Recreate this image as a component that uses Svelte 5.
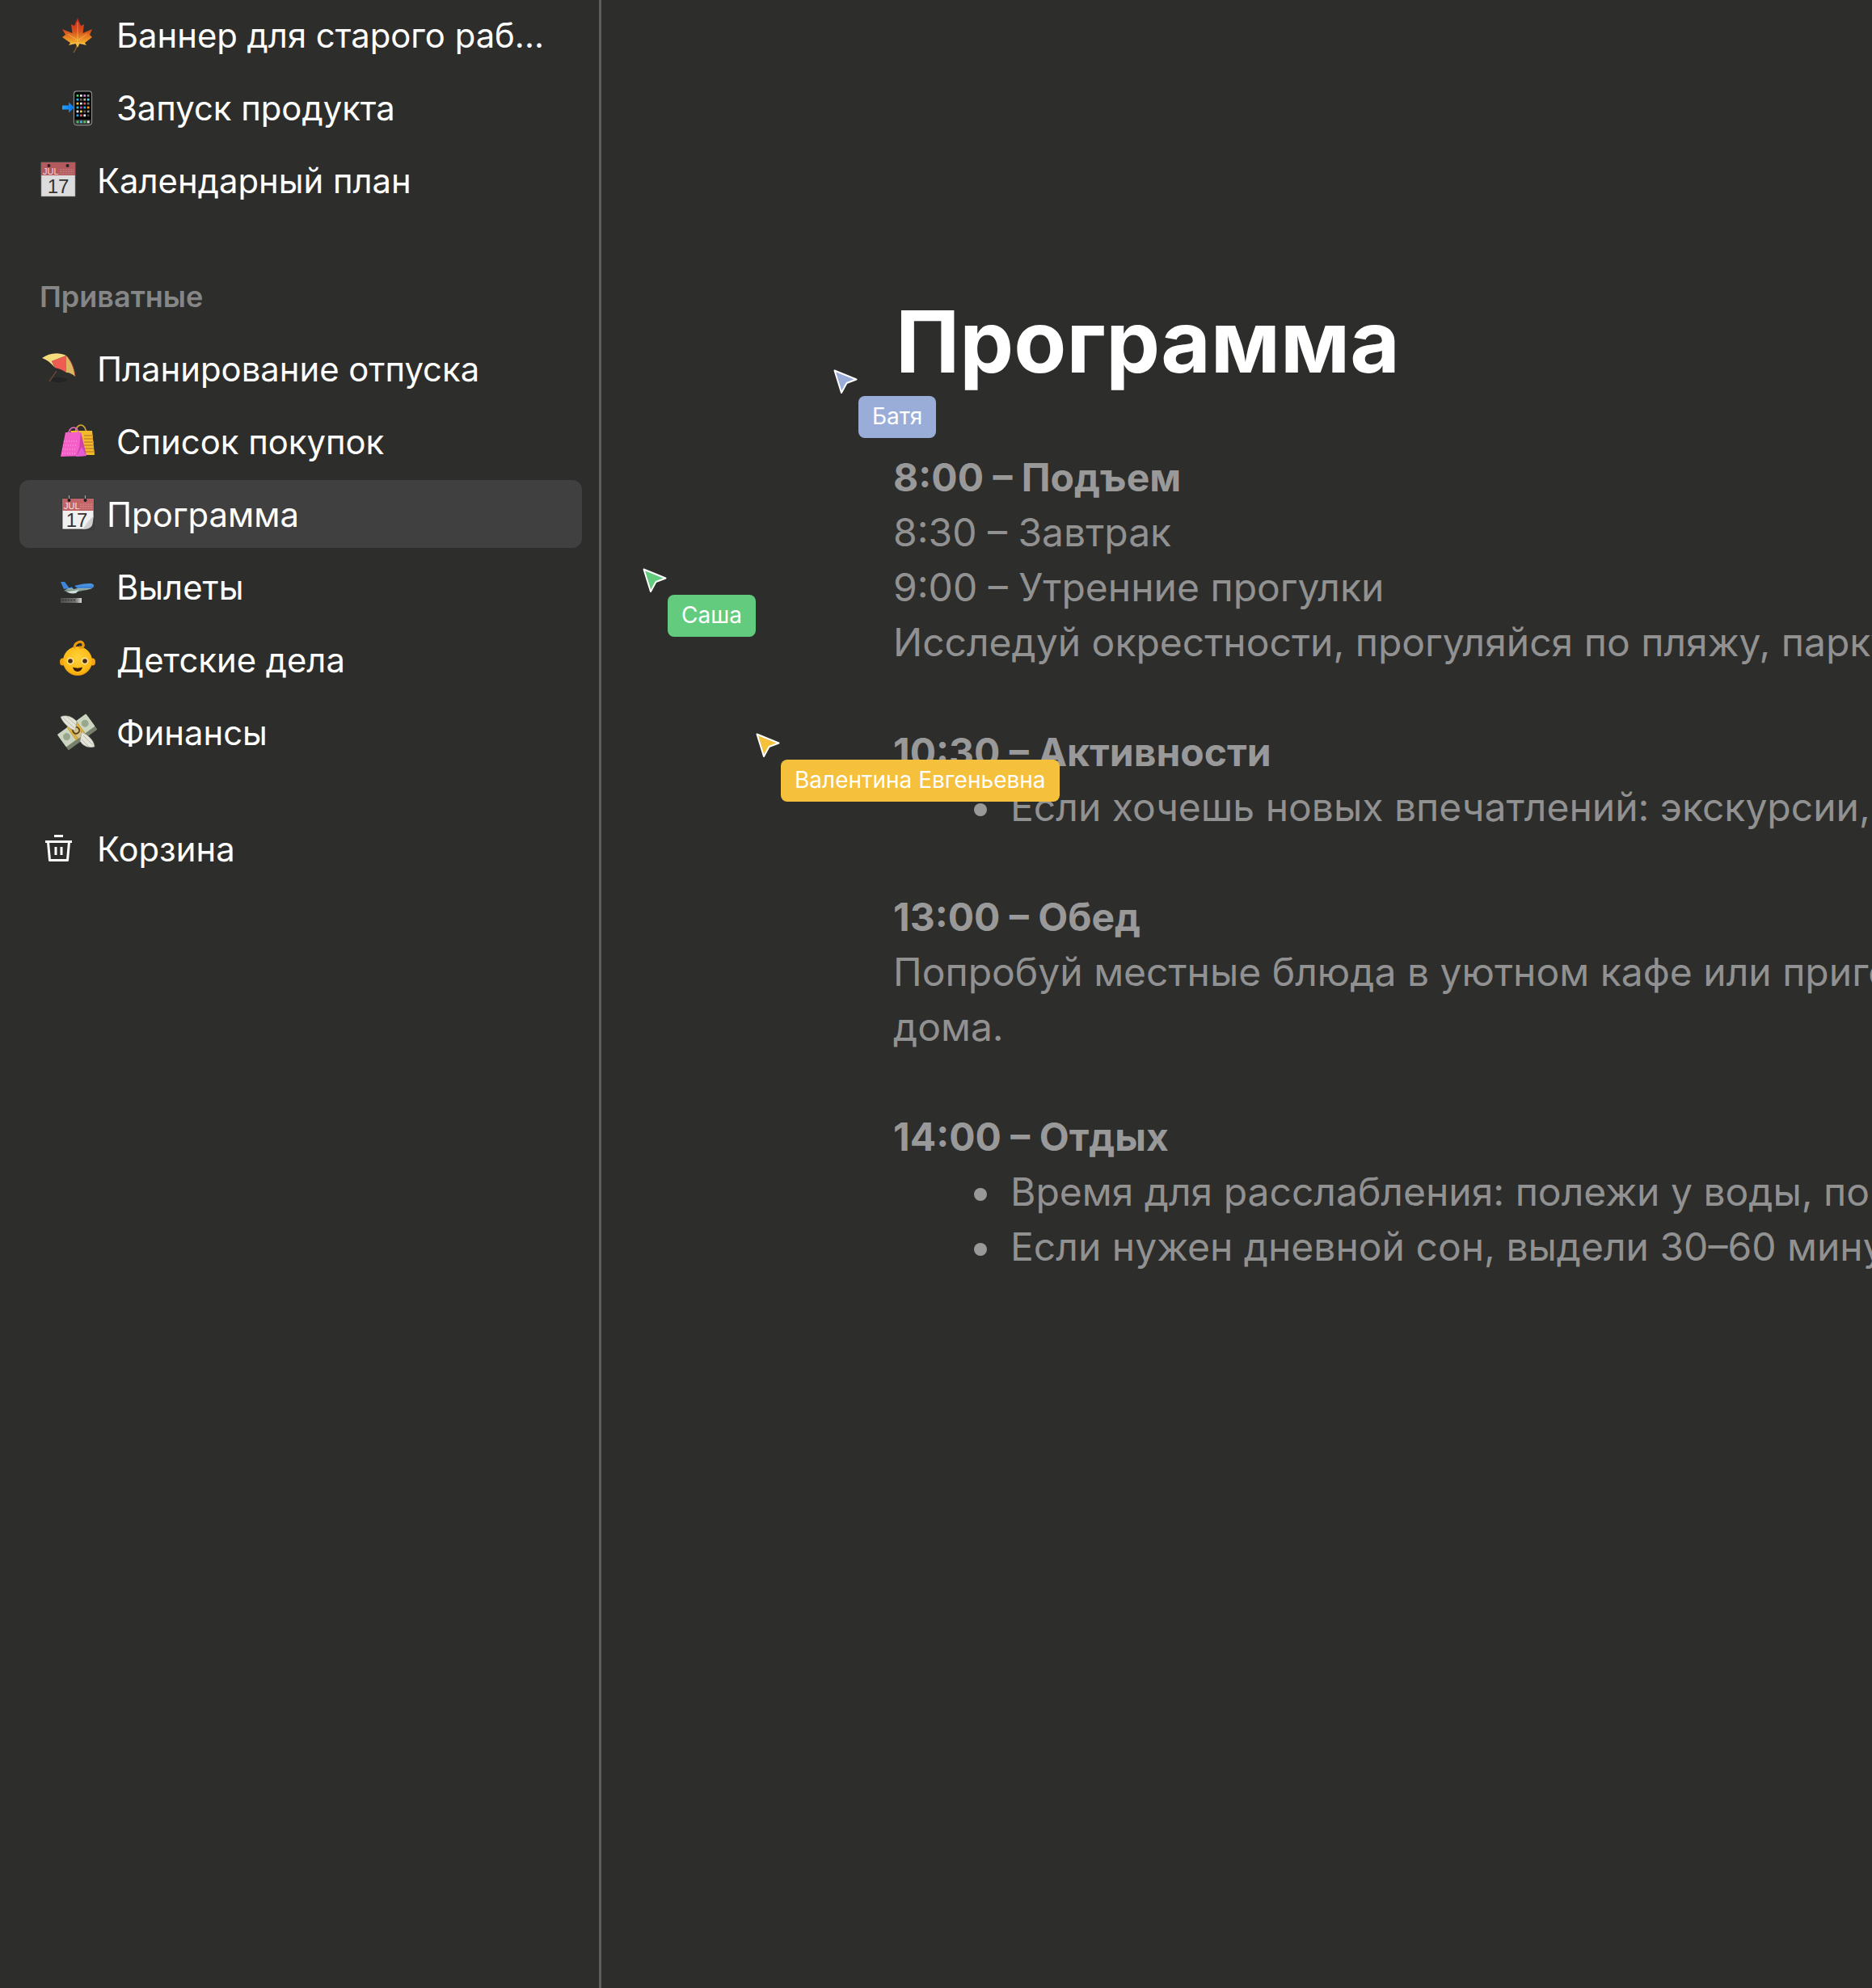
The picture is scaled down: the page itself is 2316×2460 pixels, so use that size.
<script>
  const phoneDots = [
    '#3ddc5c','#eee','#d58be0','#999',
    '#29b6f6','#666','#c9b58a','#5cd6e8',
    '#ffc93c','#eee','#e25a5a','#777',
    '#33c7d6','#c844d8','#29b6f6','#ff9f1a',
    '#fff','#ffd23c','#666','#999',
    '#2aa5ee','#e25a5a','#fff','#444'
  ];
  const dockDots = ['#35c96a','#3ab7f0','#3ddc5c','#eee'];

  const topRows = [
    { icon: 'leaf', label: 'Баннер для старого раб...', nested: true },
    { icon: 'phone', label: 'Запуск продукта', nested: true },
    { icon: 'calendar', label: 'Календарный план', nested: false }
  ];
  const privateRows = [
    { icon: 'umbrella', label: 'Планирование отпуска', nested: false },
    { icon: 'bags', label: 'Список покупок', nested: true },
    { icon: 'tear', label: 'Программа', nested: true, active: true },
    { icon: 'plane', label: 'Вылеты', nested: true },
    { icon: 'baby', label: 'Детские дела', nested: true },
    { icon: 'money', label: 'Финансы', nested: true }
  ];
  const cursors = [
    { name: 'Батя', color: '#9AADD8', left: 1030, top: 456 },
    { name: 'Саша', color: '#62CB7D', left: 794, top: 702 },
    { name: 'Валентина Евгеньевна', color: '#F5C03C', left: 934, top: 906 }
  ];
</script>

{#snippet emoji(name)}
  <svg class="emoji" viewBox="0 0 44 44" aria-hidden="true">
    {#if name === 'leaf'}
      <defs>
        <linearGradient id="lf" x1="0" y1="0" x2="0" y2="1">
          <stop offset="0" stop-color="#c8201c"/><stop offset=".45" stop-color="#d9501c"/>
          <stop offset=".8" stop-color="#f0a326"/><stop offset="1" stop-color="#f7c948"/>
        </linearGradient>
      </defs>
      <path d="M21 35 Q20 39 17 43" fill="none" stroke="#8a5a2a" stroke-width="1.4"/>
      <path fill="url(#lf)" d="M22 0 L26 10 L30 8 L28.500 19 L40 14 L37 21 L40 24 L31 31 L33 34 L24.500 32 L22 37 L19.500 32 L11 34 L13 31 L3 24 L7 21 L3 14 L15.500 19 L14 8 L18 10Z"/>
      <path d="M22 5 V34 M22 28 L10 20 M22 28 L34 20 M22 31 L13 32 M22 31 L31 32" stroke="#f6d37a" stroke-width=".7" fill="none" opacity=".75"/>
    {:else if name === 'phone'}
      <defs>
        <linearGradient id="ar" x1="0" y1="0" x2="1" y2="0"><stop offset="0" stop-color="#23a4ff"/><stop offset="1" stop-color="#0a6fe8"/></linearGradient>
      </defs>
      <rect x="17.500" y="0.800" width="22" height="42" rx="3.500" fill="#050505" stroke="#8d8d8d" stroke-width="1.200"/>
      {#each phoneDots as c, i}
        <rect x={20.6 + (i % 4) * 4.4} y={5 + Math.floor(i / 4) * 4.9} width="2.7" height="2.7" fill={c}/>
      {/each}
      <rect x="19" y="36" width="19" height="5.800" rx="1" fill="#3b3b3b"/>
      {#each dockDots as c, i}
        <rect x={20.6 + i * 4.4} y="37.5" width="2.8" height="2.8" fill={c}/>
      {/each}
      <path fill="url(#ar)" d="M3 18.500 H11 V14.500 L18 21 L11 27.500 V23.500 H3Z"/>
    {:else if name === 'calendar'}
      <rect x="1" y="-1" width="42" height="42" fill="#dcdcdc" stroke="#8a8a8a" stroke-width=".6"/>
      <rect x="1" y="-1" width="42" height="16" fill="#b4595d"/>
      <circle cx="10.500" cy="3" r="2" fill="#2a2024"/>
      <circle cx="33.500" cy="3" r="2" fill="#2a2024"/>
      <text x="3" y="13.500" class="cal-month" fill="#efdcdc">JUL</text>
      <path d="M24 8 H41 M24 10.500 H41 M24 13 H41" stroke="#cf8f91" stroke-width="1" stroke-dasharray="1.200 .8"/>
      <text x="22" y="37" text-anchor="middle" class="cal-day" fill="#333">17</text>
    {:else if name === 'tear'}
      <rect x="3" y="3" width="39" height="38" fill="#f0f0f0" stroke="#2c2c2c" stroke-width=".8"/>
      <rect x="3" y="3" width="39" height="15" fill="#c06468"/>
      <rect x="11" y="-1" width="1" height="5" fill="#9fb3c8"/><rect x="31" y="-1" width="1" height="5" fill="#9fb3c8"/>
      <circle cx="11.500" cy="5" r="2" fill="#231b1d"/>
      <circle cx="31.500" cy="5" r="2" fill="#231b1d"/>
      <text x="5" y="15.500" class="cal-month" fill="#f6e5e5">JUL</text>
      <path d="M25 10 H40 M25 12.500 H40 M25 15 H40" stroke="#dc9a9c" stroke-width="1" stroke-dasharray="1.200 .8"/>
      <text x="21" y="38" text-anchor="middle" class="cal-day" fill="#333">17</text>
      <path d="M42 25 L30 41 H42Z" fill="#3f3f3f"/>
      <path d="M42 24 C37 28 33 35 28 41 C33 41 38 40 40 36 C41 33 41 29 42 24Z" fill="#cfcfcf"/>
    {:else if name === 'umbrella'}
      <ellipse cx="23" cy="36" rx="10" ry="3" fill="#242424"/>
      <path d="M20 25 L11 38" stroke="#7a4b3c" stroke-width="1.300"/>
      <path fill="#f5dc7c" d="M2 9 C10 3 22 1 32 6 L14 13 L18 21 C13 15 8 11 2 9Z"/>
      <path fill="#ef5c52" d="M32 6 L14 13 C15 15 17 18 18 21 C23 22 28 24 32 27Z"/>
      <path fill="#dcb661" d="M32 6 C38 12 42 22 43 32 C40 29 36 27 32 27Z"/>
      <path d="M32 6 C38 12 42 22 43 32" stroke="#b3443e" stroke-width=".8" fill="none"/>
    {:else if name === 'bags'}
      <path d="M19 14 C19 -2 33 -2 33 14" fill="none" stroke="#d9a52f" stroke-width="1.600"/>
      <path fill="#f0bc2c" d="M13 9 H40 L43 39 H24Z"/>
      <path d="M30 15 H41 M30 19 H41 M30 23 H42 M30 27 H42 M30 31 H42 M30 35 H43" stroke="#d7912a" stroke-width="1.800"/>
      <path fill="#f45fc8" d="M7 11 H26 L33 40 L1 41Z"/>
      <path fill="#c63aa8" d="M26 11 L33 40 L20 41 L24 30Z" opacity=".8"/>
      <path fill="#e25dcf" d="M20 41 L27 29 L33 40Z"/>
      <path d="M10 17 C10 1 24 1 24 17" fill="none" stroke="#e36bb8" stroke-width="1.600"/>
      <path d="M5 22 H21 M4 27 H21 M3 32 H20 M3 37 H19" stroke="#ffb2e4" stroke-width="1" stroke-dasharray="1 2"/>
    {:else if name === 'plane'}
      <defs>
        <linearGradient id="pl" x1="0" y1="0" x2="0" y2="1"><stop offset="0" stop-color="#4b9be8"/><stop offset=".55" stop-color="#3d7fd0"/><stop offset=".6" stop-color="#9fb4a8"/><stop offset="1" stop-color="#5a7a72"/></linearGradient>
        <linearGradient id="rw" x1="0" y1="0" x2="1" y2="0"><stop offset="0" stop-color="#4d4d4d"/><stop offset=".7" stop-color="#6f6f6f"/><stop offset="1" stop-color="#d8d8d8"/></linearGradient>
      </defs>
      <path fill="#3e85dc" d="M1 16 L6 16 L12 24 L5 25Z"/>
      <path fill="url(#pl)" d="M5 27 C14 21 28 18 37 18 C41 18 43 20 42 22 C40 25 34 26 28 27 C20 29 10 29 5 27Z"/>
      <path d="M10 15 L22 24 L17 25Z" fill="#1f2c3a"/>
      <path d="M8 28 L24 26 L20 30 C15 31 11 30 8 28Z" fill="#cfdcd8"/>
      <rect x="1" y="36" width="26" height="6" fill="url(#rw)"/>
      <path d="M3 38.500 H20" stroke="#2e2e2e" stroke-width="1" stroke-dasharray="2 1.500"/>
    {:else if name === 'baby'}
      <defs>
        <radialGradient id="bb" cx=".5" cy=".4" r=".65"><stop offset="0" stop-color="#ffd23a"/><stop offset=".75" stop-color="#fdb813"/><stop offset="1" stop-color="#e8920a"/></radialGradient>
      </defs>
      <ellipse cx="3.500" cy="25" rx="3.500" ry="4.500" fill="#f4a40f"/>
      <ellipse cx="40.500" cy="25" rx="3.500" ry="4.500" fill="#f4a40f"/>
      <circle cx="22" cy="24" r="18" fill="url(#bb)"/>
      <path d="M18 7 C19 0 28 -2 29 3 C30 6 27 8 25 7" fill="none" stroke="#eb9a0d" stroke-width="3.200" stroke-linecap="round"/>
      <circle cx="13" cy="24" r="4.400" fill="#ffe49a"/><circle cx="31" cy="24" r="4.400" fill="#ffe49a"/>
      <circle cx="13" cy="24" r="2.800" fill="#4a2a10"/><circle cx="31" cy="24" r="2.800" fill="#4a2a10"/>
      <path d="M16 31.500 C19 33 25 33 28 31.500 C27 36 24 37 22 37 C20 37 17 36 16 31.500Z" fill="#3a1b08"/>
    {:else if name === 'money'}
      <g transform="rotate(-36 21 21)">
        <rect x="-1" y="14" width="44" height="20" rx="1" fill="#77806a"/>
        <rect x="-1" y="10" width="44" height="19" rx="1" fill="#ccd5c0"/>
        <circle cx="7" cy="19" r="4.500" fill="#98a88e"/><circle cx="35" cy="19" r="4.500" fill="#98a88e"/>
        <rect x="14" y="9.500" width="14" height="20" fill="#4c4a2c"/>
        <rect x="14" y="9.500" width="2.800" height="20" fill="#e3b23c"/>
        <rect x="25.200" y="9.500" width="2.800" height="20" fill="#e3b23c"/>
        <rect x="17" y="9.500" width="8" height="20" fill="#d3c58a"/>
        <circle cx="21" cy="19.500" r="4" fill="none" stroke="#5a3d12" stroke-width="1.800"/>
      </g>
      <path fill="#e4e4da" stroke="#9b9b8c" stroke-width=".6" d="M1 3 C8 0 16 3 21 9 L19 20 C12 18 4 11 1 3Z"/>
      <path d="M4 4 L18 17 M9 3 L20 13" stroke="#a8a898" stroke-width=".7"/>
      <path fill="#e4e4da" stroke="#9b9b8c" stroke-width=".6" d="M43 40 C37 42 29 40 25 33 L27 22 C34 25 42 31 43 40Z"/>
      <path d="M29 26 L41 38 M27 31 L36 40" stroke="#a8a898" stroke-width=".7"/>
    {:else if name === 'trash'}
      <g fill="none" stroke="#fff" stroke-width="3">
        <path d="M17 6.500 H28"/>
        <path d="M6 13.500 H39"/>
        <path d="M9.500 14 L11.500 36.500 H33.500 L35.500 14" stroke-linejoin="round"/>
        <path d="M19 20 V30 M26 20 V30"/>
      </g>
    {/if}
  </svg>
{/snippet}

{#snippet row(item)}
  <li class="row" class:nested={item.nested} class:active={item.active}>
    {@render emoji(item.icon)}
    <span class="label">{item.label}</span>
  </li>
{/snippet}

<div class="page">
  <aside class="sidebar">
    <ul class="rows">
      {#each topRows as item}{@render row(item)}{/each}
    </ul>
    <h2 class="section">Приватные</h2>
    <ul class="rows private">
      {#each privateRows as item}{@render row(item)}{/each}
    </ul>
    <ul class="rows private trash">
      {@render row({ icon: 'trash', label: 'Корзина', nested: false })}
    </ul>
  </aside>

  <main class="doc">
    <h1>Программа</h1>
    <div class="body">
      <p><b>8:00 – Подъем</b></p>
      <p>8:30 – Завтрак</p>
      <p>9:00 – Утренние прогулки</p>
      <p>Исследуй окрестности, прогуляйся по пляжу, парку или набережной.</p>

      <p class="gap"><b>10:30 – Активности</b></p>
      <ul class="bullets"><li>Если хочешь новых впечатлений: экскурсии, прокат велосипедов, водные виды спорта.</li></ul>

      <p class="gap"><b>13:00 – Обед</b></p>
      <p>Попробуй местные блюда в уютном кафе или приготовь что-нибудь лёгкое<br/>дома.</p>

      <p class="gap"><b>14:00 – Отдых</b></p>
      <ul class="bullets">
        <li>Время для расслабления: полежи у воды, почитай книгу в тени.</li>
        <li>Если нужен дневной сон, выдели 30–60 минут после обеда.</li>
      </ul>
    </div>
  </main>

  {#each cursors as c}
    <div class="presence" style="left:{c.left}px;top:{c.top}px;--c:{c.color}">
      <svg class="arrow" viewBox="0 0 32 32" aria-hidden="true">
        <path d="M2.500 2.500 L29.500 13.500 L17.500 18 L11 30Z" fill={c.color} stroke="#fff" stroke-width="2" stroke-linejoin="round"/>
      </svg>
      <span class="tag">{c.name}</span>
    </div>
  {/each}
</div>

<style>
  :global(body) {
    margin: 0;
    background: #2d2d2c;
  }
  .page {
    position: relative;
    display: flex;
    width: 2316px;
    height: 2460px;
    overflow: hidden;
    background: #2d2d2c;
    font-family: Inter, "Noto Sans", sans-serif;
    color: #fff;
  }
  .sidebar {
    flex: none;
    box-sizing: border-box;
    width: 744px;
    padding: 2px 21px 0 24px;
    border-right: 3px solid #5e5e5e;
  }
  .rows {
    list-style: none;
    margin: 0;
    padding: 0;
    display: flex;
    flex-direction: column;
    gap: 6px;
  }
  .trash {
    margin-top: 60px;
  }
  .row {
    display: flex;
    align-items: center;
    gap: 26px;
    height: 84px;
    padding-left: 26px;
    border-radius: 12px;
  }
  .row.nested {
    padding-left: 50px;
    gap: 26px;
  }
  .row.active {
    background: #404040;
    gap: 14px;
  }
  .emoji {
    flex: none;
    width: 44px;
    height: 44px;
    overflow: visible;
  }
  .cal-month {
    font: 400 11px "Liberation Sans", sans-serif;
  }
  .cal-day {
    font: 400 24px "Liberation Sans", sans-serif;
  }
  .label {
    font-size: 41.8px;
    line-height: 50px;
    white-space: nowrap;
  }
  .private .label {
    padding-top: 2px;
  }
  .section {
    margin: 77px 0 23px 25px;
    font-size: 36px;
    line-height: 48px;
    font-weight: 600;
    color: #868686;
  }
  .doc {
    flex: 1;
    min-width: 0;
    padding: 0 0 0 361px;
    overflow: hidden;
  }
  h1 {
    margin: 355px 0 0 3px;
    font-size: 106.2px;
    line-height: 136px;
    font-weight: 700;
    white-space: nowrap;
  }
  .body {
    margin-top: 66px;
    font-size: 48px;
    line-height: 68px;
    color: #919191;
    white-space: nowrap;
  }
  .body p {
    margin: 0;
  }
  .body b {
    font-weight: 700;
    color: #999;
  }
  .body .gap {
    margin-top: 68px;
  }
  .bullets {
    list-style: none;
    margin: 0;
    padding: 0 0 0 145px;
  }
  .bullets li {
    position: relative;
  }
  .bullets li::before {
    content: "";
    position: absolute;
    left: -45px;
    top: 29px;
    width: 16px;
    height: 16px;
    border-radius: 50%;
    background: #999;
  }
  .presence {
    position: absolute;
    width: 0;
    height: 0;
  }
  .arrow {
    position: absolute;
    left: 0;
    top: 0;
    width: 32px;
    height: 32px;
  }
  .tag {
    position: absolute;
    left: 32px;
    top: 34px;
    box-sizing: border-box;
    height: 52px;
    padding: 0 17px;
    border-radius: 8px;
    background: var(--c);
    color: #fff;
    font-size: 28px;
    line-height: 50px;
    white-space: nowrap;
  }
</style>
